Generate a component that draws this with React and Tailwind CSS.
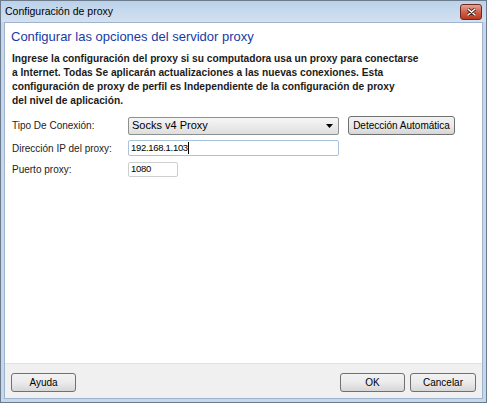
import React from "react";

function Btn({ children, className = "" }) {
  return (
    <div
      className={
        "flex items-center justify-center whitespace-nowrap border border-[#707070] rounded-[3px] bg-gradient-to-b from-[#f2f2f2] via-[#ebebeb] to-[#d6d6d6] text-[10px] text-black " +
        className
      }
    >
      {children}
    </div>
  );
}

export default function App() {
  return (
    <div className="w-[487px] h-[403px] flex flex-col bg-[#c5d7ec] border border-[#6b7b8c] overflow-hidden font-['Liberation_Sans',Arial,sans-serif]">
      {/* Title bar */}
      <div className="h-[21px] flex items-center justify-between bg-gradient-to-b from-[#bcd2ea] to-[#d3e1f1] pl-[4px] pr-[4px]">
        <span className="text-[10.5px] text-black leading-none">Configuración de proxy</span>
        <div className="w-[22px] h-[16px] mt-[1px] rounded-[3px] border border-[#6e2a20] bg-gradient-to-b from-[#e8a493] via-[#d0614a] to-[#b8391f] flex items-center justify-center">
          <svg width="9" height="8" viewBox="0 0 9 8">
            <path d="M1 1 L8 7 M8 1 L1 7" stroke="#3a1a14" strokeWidth="3" strokeLinecap="round" />
            <path d="M1 1 L8 7 M8 1 L1 7" stroke="#ffffff" strokeWidth="1.6" strokeLinecap="round" />
          </svg>
        </div>
      </div>
      <div className="flex-1 flex px-[3px] pb-[3px]">
        <div className="flex-1 flex flex-col border border-[#9fb4cc] bg-white">
          <div className="flex-1 bg-white pl-[6px] pt-[5px]">
            <div className="text-[13px] text-[#1a3aa6] leading-[18px]">
              Configurar las opciones del servidor proxy
            </div>
            <p className="mt-[6px] text-[10.2px] font-bold text-[#1b1b1b] leading-[14px] whitespace-nowrap pl-[1px]">
              Ingrese la configuración del proxy si su computadora usa un proxy para conectarse
              <br />
              a Internet. Todas Se aplicarán actualizaciones a las nuevas conexiones. Esta
              <br />
              configuración de proxy de perfil es Independiente de la configuración de proxy
              <br />
              del nivel de aplicación.
            </p>
            <div className="mt-[8px] flex flex-col gap-[5px] text-[10px] text-[#222] pl-[1px]">
              <div className="flex items-center h-[19px]">
                <span className="w-[116px]">Tipo De Conexión:</span>
                <div className="w-[211px] h-[18px] border border-[#8e8f8f] rounded-[2px] bg-gradient-to-b from-[#f6f6f6] to-[#dedede] flex items-center justify-between px-[3px]">
                  <span className="text-[11px] text-black">Socks v4 Proxy</span>
                  <svg width="7" height="4" viewBox="0 0 7 4" className="mr-[2px]"><path d="M0 0 H7 L3.5 4 Z" fill="#000" /></svg>
                </div>
                <Btn className="ml-[9px] w-[107px] h-[19px] text-[9.5px]">Detección Automática</Btn>
              </div>
              <div className="flex items-center h-[16px]">
                <span className="w-[116px]">Dirección IP del proxy:</span>
                <div className="w-[211px] h-[16px] border border-[#a9c3dc] rounded-[2px] bg-white flex items-center px-[2px] text-[9.5px] tracking-[-0.3px] text-black">
                  192.168.1.103<span className="w-[1px] h-[12px] bg-black"></span>
                </div>
              </div>
              <div className="flex items-center h-[16px]">
                <span className="w-[116px]">Puerto proxy:</span>
                <div className="w-[50px] h-[15px] border border-[#cfcfcf] rounded-[2px] bg-white flex items-center px-[2px] text-[9.5px] tracking-[-0.3px] text-black">
                  1080
                </div>
              </div>
            </div>
          </div>
          <div className="h-[35px] bg-[#f0f0f0] border-t border-[#dfdfdf] flex items-center px-[6px] pt-[3px]">
            <Btn className="w-[65px] h-[19px]">Ayuda</Btn>
            <div className="flex-1" />
            <Btn className="w-[65px] h-[19px] border-[#3c7fb1]">OK</Btn>
            <Btn className="ml-[5px] w-[66px] h-[19px]">Cancelar</Btn>
          </div>
        </div>
      </div>
    </div>
  );
}
